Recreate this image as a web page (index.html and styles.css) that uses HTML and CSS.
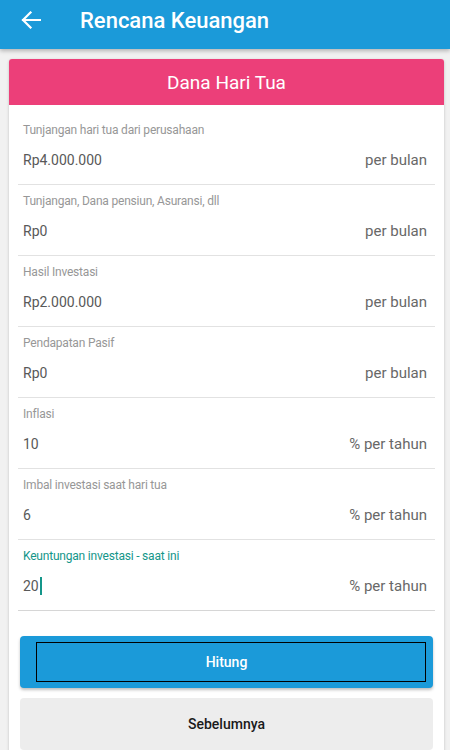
FILE: index.html
```html
<!DOCTYPE html>
<html lang="id">
<head>
<meta charset="utf-8">
<title>Rencana Keuangan</title>
<link rel="stylesheet" href="styles.css">
</head>
<body>
<header class="appbar">
  <div class="appbar-row">
    <svg class="back" width="20" height="18" viewBox="0 0 20 18" aria-hidden="true">
      <path d="M19 9H2M9.5 1.5L2 9l7.5 7.5" fill="none" stroke="#fff" stroke-width="2.2" stroke-linecap="square"/>
    </svg>
    <h1 class="title">Rencana Keuangan</h1>
  </div>
</header>
<main class="content">
  <section class="card">
    <div class="card-head">Dana Hari Tua</div>
    <div class="card-body">
      <div class="field">
        <div class="label">Tunjangan hari tua dari perusahaan</div>
        <div class="value-row"><span class="value">Rp4.000.000</span><span class="unit">per bulan</span></div>
      </div>
      <div class="field">
        <div class="label">Tunjangan, Dana pensiun, Asuransi, dll</div>
        <div class="value-row"><span class="value">Rp0</span><span class="unit">per bulan</span></div>
      </div>
      <div class="field">
        <div class="label">Hasil Investasi</div>
        <div class="value-row"><span class="value">Rp2.000.000</span><span class="unit">per bulan</span></div>
      </div>
      <div class="field">
        <div class="label">Pendapatan Pasif</div>
        <div class="value-row"><span class="value">Rp0</span><span class="unit">per bulan</span></div>
      </div>
      <div class="field">
        <div class="label">Inflasi</div>
        <div class="value-row"><span class="value">10</span><span class="unit">% per tahun</span></div>
      </div>
      <div class="field">
        <div class="label">Imbal investasi saat hari tua</div>
        <div class="value-row"><span class="value">6</span><span class="unit">% per tahun</span></div>
      </div>
      <div class="field focused">
        <div class="label">Keuntungan investasi - saat ini</div>
        <div class="value-row"><span class="value">20<span class="caret"></span></span><span class="unit">% per tahun</span></div>
      </div>
      <div class="actions">
        <button class="btn btn-primary">Hitung</button>
        <button class="btn btn-secondary">Sebelumnya</button>
      </div>
    </div>
  </section>
</main>
</body>
</html>
```
FILE: styles.css
```css
* { box-sizing: border-box; }
html, body { margin: 0; padding: 0; }
body {
  width: 450px;
  height: 750px;
  overflow: hidden;
  background: #f1f1f1;
  font-family: Roboto, "Noto Sans", "Liberation Sans", sans-serif;
}
.appbar {
  height: 49px;
  background: #1b9ad9;
  box-shadow: 0 2px 4px rgba(0,0,0,0.25);
  position: relative;
  z-index: 2;
}
.appbar-row {
  height: 40px;
  display: flex;
  align-items: center;
  padding-left: 21px;
}
.back { display: block; }
.title {
  margin: 0 0 0 39px;
  font-size: 22px;
  font-weight: 500;
  color: #fff;
  letter-spacing: 0;
}
.content {
  padding: 10px 6px 0 9px;
}
.card {
  background: #fff;
  border-radius: 3px;
  box-shadow: 0 1px 3px rgba(0,0,0,0.22);
  overflow: hidden;
  height: 700px;
}
.card-head {
  height: 46px;
  background: #ec3f79;
  color: #fff;
  font-size: 19px;
  display: flex;
  align-items: center;
  justify-content: center;
}
.card-body {
  padding: 9px 9px 0 9px;
}
.field {
  padding: 8px 8px 12px 5px;
  border-bottom: 1px solid #e2e2e2;
}
.label {
  font-size: 12px;
  letter-spacing: -0.2px;
  line-height: 16px;
  color: #979797;
}
.value-row {
  margin-top: 10px;
  height: 24px;
  display: flex;
  align-items: center;
  justify-content: space-between;
}
.value {
  font-size: 14px;
  color: #595959;
  display: flex;
  align-items: center;
}
.unit {
  font-size: 15px;
  color: #686868;
}
.focused .label { color: #14968a; }
.focused { border-bottom-color: #d6d6d6; }
.caret {
  display: inline-block;
  width: 2px;
  height: 18px;
  background: #14968a;
  margin-left: 1px;
}
.actions {
  padding: 25px 2px 0 2px;
  display: flex;
  flex-direction: column;
  gap: 10px;
}
.btn {
  position: relative;
  display: flex;
  align-items: center;
  justify-content: center;
  border: 0;
  border-radius: 4px;
  height: 52px;
  width: 100%;
  font-family: inherit;
  font-size: 14px;
  font-weight: 500;
  padding: 0;
}
.btn-primary {
  background: #1b9ad9;
  color: #fff;
  box-shadow: 0 2px 3px rgba(0,0,0,0.25);
}
.btn-primary::after {
  content: "";
  position: absolute;
  left: 16px;
  top: 6px;
  right: 7px;
  bottom: 6px;
  border: 1.5px solid #000;
}
.btn-secondary {
  background: #ededed;
  color: #1a1a1a;
}
```
